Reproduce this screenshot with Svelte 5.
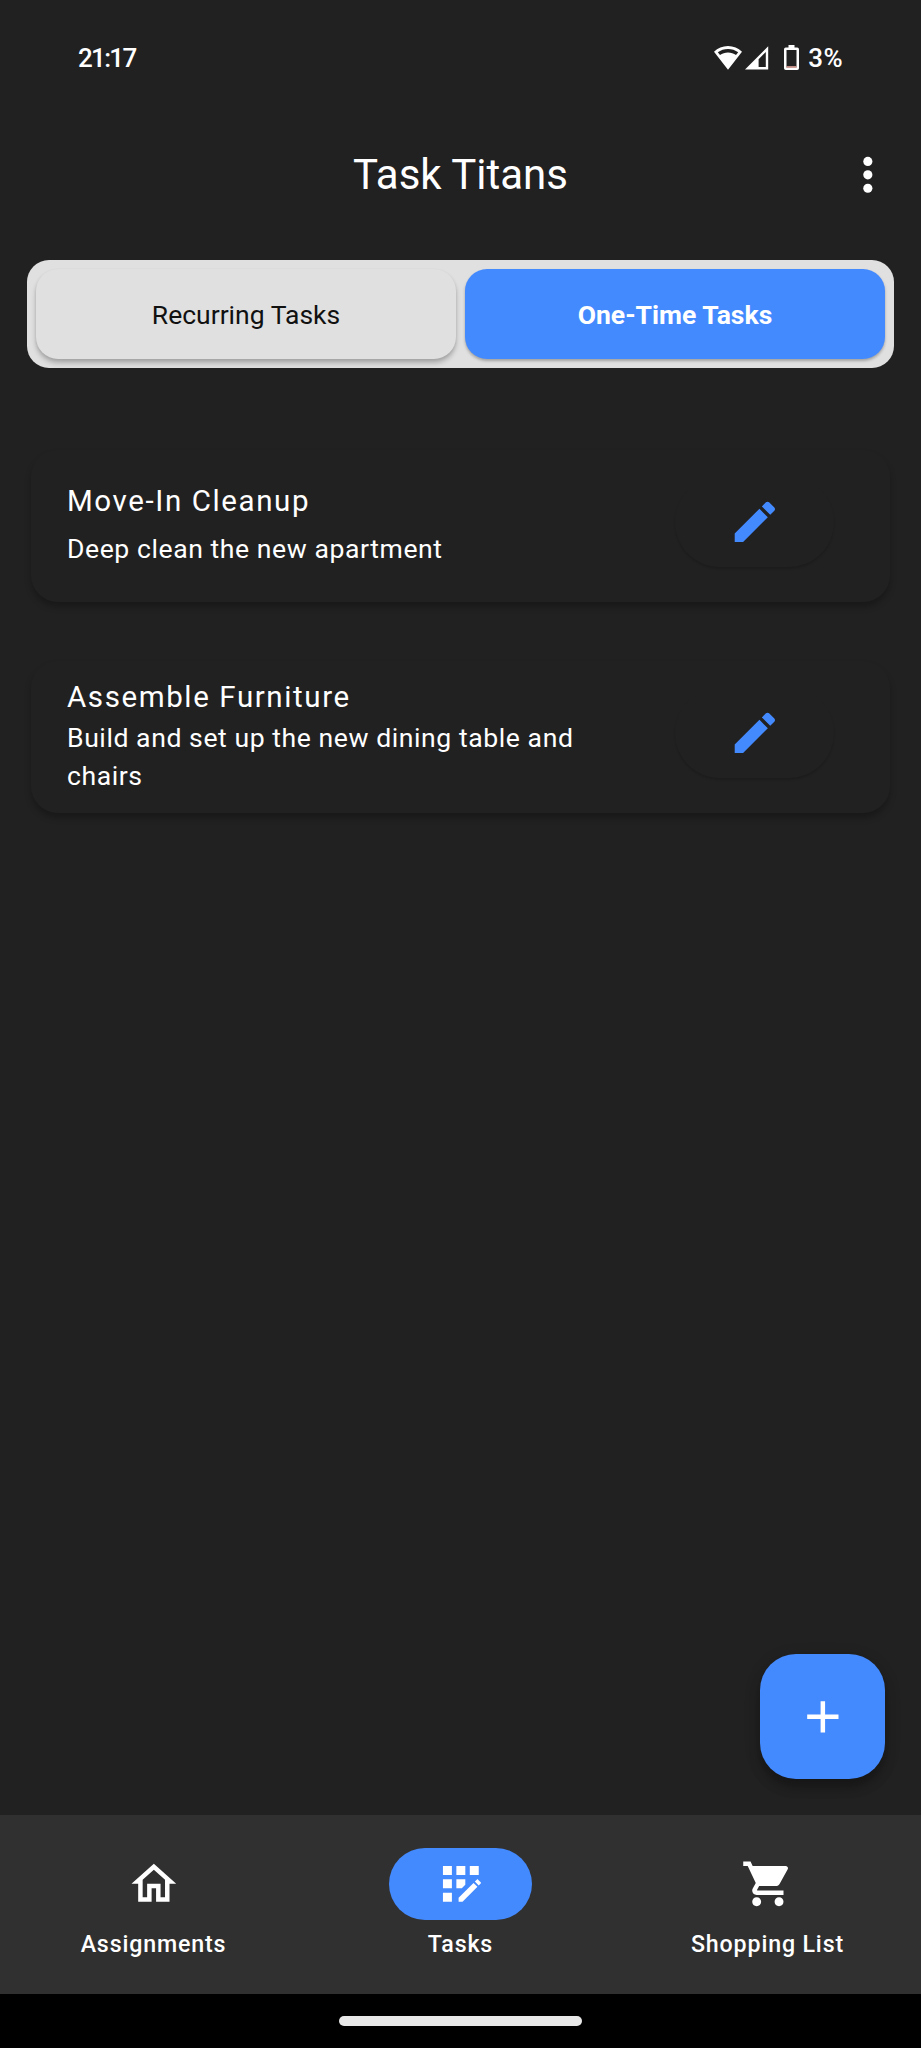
<script>
  const tasks = [
    { title: 'Move-In Cleanup', text: 'Deep clean the new apartment', gap: 8 },
    { title: 'Assemble Furniture', text: 'Build and set up the new dining table and chairs', gap: 1 },
  ];
  const tabs = [
    {
      label: 'Assignments',
      d: 'M12 5.69l5 4.5V18h-2v-6H9v6H7v-7.81l5-4.5M12 3L2 12h3v8h6v-6h2v6h6v-8h3L12 3z',
    },
    {
      label: 'Tasks',
      active: true,
      d: 'M10 4h4v4h-4z M4 16h4v4H4z M4 10h4v4H4z M4 4h4v4H4z M14 12.42V10h-4v4h2.42z M20.88 11.29l-1.17-1.17c-.16-.16-.42-.16-.58 0l-.88.88L20 12.75l.88-.88c.16-.16.16-.42 0-.58z M11 18.25V20h1.75l6.67-6.67-1.75-1.75z M16 4h4v4h-4z',
    },
    {
      label: 'Shopping List',
      d: 'M7 18c-1.1 0-1.99.9-1.99 2S5.9 22 7 22s2-.9 2-2-.9-2-2-2zM1 2v2h2l3.6 7.59-1.35 2.45c-.16.28-.25.61-.25.96 0 1.1.9 2 2 2h12v-2H7.42c-.14 0-.25-.11-.25-.25l.03-.12.9-1.63h7.45c.75 0 1.41-.41 1.75-1.03l3.58-6.49c.08-.14.12-.31.12-.48 0-.55-.45-1-1-1H5.21l-.94-2H1zm16 16c-1.1 0-1.99.9-1.99 2s.89 2 1.99 2 2-.9 2-2-.9-2-2-2z',
    },
  ];
</script>

<div class="screen">
  <div class="status">
    <span class="time">21:17</span>
    <div class="indicators">
      <svg class="wifi" width="28" height="24" viewBox="0 0 28 24">
        <path fill="#fff" fill-rule="evenodd" d="M14 0C8.600 0 3.700 2.200 0 5.700L14 23.800L28 5.700C24.300 2.200 19.400 0 14 0zM3.800 6.200C6.700 4.100 10.200 2.900 14 2.900S21.300 4.100 24.200 6.200L22 9C19.700 7.300 17 6.400 14 6.400S8.300 7.300 6 9z" />
      </svg>
      <svg class="signal" width="24" height="24" viewBox="0 0 24 24">
        <path fill="#fff" fill-rule="evenodd" d="M23.200 .3V23.400H0zM20.800 6L13.600 13.200V21H20.800z" />
      </svg>
      <svg class="battery" width="15" height="25" viewBox="0 0 15 25">
        <path fill="#fff" fill-rule="evenodd" d="M4.500 0h6v2.600H13.200Q15 2.600 15 4.400V23.200Q15 25 13.200 25H1.800Q0 25 0 23.200V4.400Q0 2.600 1.800 2.600H4.500zM2.500 5.100V22.500H12.500V5.100z" />
        <path fill="#e9a79c" d="M2.500 21.200h10v1.500h-10z" />
      </svg>
      <span class="percent">3%</span>
    </div>
  </div>

  <header>
    <h1>Task Titans</h1>
    <button class="menu" aria-label="Menu">
      <svg class="icon" viewBox="0 0 24 24"><circle cx="12" cy="6" r="2.050" /><circle cx="12" cy="12" r="2.050" /><circle cx="12" cy="18" r="2.050" /></svg>
    </button>
  </header>

  <div class="segments">
    <button>Recurring Tasks</button>
    <button class="selected">One-Time Tasks</button>
  </div>

  <main>
    {#each tasks as task}
      <article>
        <div class="copy">
          <h2>{task.title}</h2>
          <p style="margin-top: {task.gap}px">{task.text}</p>
        </div>
        <button class="edit" aria-label="Edit">
          <svg class="icon" viewBox="0 0 24 24">
            <path d="M3 17.25V21h3.75L17.81 9.94l-3.75-3.75L3 17.25zM20.71 7.04c.39-.39.39-1.020 0-1.410l-2.340-2.340c-.39-.39-1.020-.39-1.410 0l-1.830 1.830 3.750 3.750 1.830-1.830z" />
          </svg>
        </button>
      </article>
    {/each}
  </main>

  <div class="fab-row">
    <button class="fab" aria-label="Add">
      <svg class="icon" viewBox="0 0 24 24"><path d="M19 13h-6v6h-2v-6H5v-2h6V5h2v6h6v2z" /></svg>
    </button>
  </div>

  <nav>
    {#each tabs as tab}
      <div class="tab">
        <div class="pill" class:active={tab.active}>
          <svg class="icon" viewBox="0 0 24 24"><path d={tab.d} /></svg>
        </div>
        <span>{tab.label}</span>
      </div>
    {/each}
  </nav>
  <div class="gesture"><div class="handle"></div></div>
</div>

<style>
  :global(body) { background: #212121; }
  .screen {
    width: 921px; height: 2048px; display: flex; flex-direction: column;
    background: #212121; color: #fff; font-family: Roboto, sans-serif; overflow: hidden;
  }
  button { border: 0; padding: 0; margin: 0; font: inherit; color: inherit; background: none; }
  h1, h2, p { margin: 0; font-weight: 400; }
  .icon { width: 53.7px; height: 53.7px; fill: currentColor; display: block; }
  .status {
    height: 115px; flex: none; box-sizing: border-box; display: flex; justify-content: space-between;
    padding: 0 78px; font-size: 26px; font-weight: 500; line-height: 116px;
  }
  .time { letter-spacing: -1.700px; }
  .indicators { display: flex; align-items: center; }
  .signal { margin-left: 3px; }
  .battery { margin-left: 15px; }
  .percent { margin-left: 9px; letter-spacing: .4px; }
  header {
    height: 119px; flex: none; display: grid; grid-template-columns: 107px 1fr 107px; align-items: center;
  }
  h1 { grid-column: 2; text-align: center; font-size: 42px; line-height: 50px; }
  .menu { justify-self: center; }
  .segments {
    flex: none; height: 107.500px; margin: 26px 27px 0; box-sizing: border-box; padding: 9px;
    display: grid; grid-template-columns: 1fr 1fr; gap: 9px; background: #e0e0e0; border-radius: 22px;
  }
  .segments button {
    border-radius: 22px; background: #e0e0e0; color: #111; font-size: 26.500px; padding-top: 1px;
    box-shadow: 0 4px 5px rgba(0, 0, 0, .24), 0 1px 3px rgba(0, 0, 0, .07);
  }
  .segments .selected {
    background: #448aff; color: #fff; font-weight: 700;
    box-shadow: 0 2px 3px rgba(0, 0, 0, .28);
  }
  main { flex: 1; padding: 82px 31px 0; display: flex; flex-direction: column; gap: 59px; }
  article {
    height: 152px; box-sizing: border-box; padding: 0 56px 0 36px; border-radius: 27px;
    display: flex; align-items: center; justify-content: space-between;
    box-shadow: 0 5px 6px rgba(0, 0, 0, .25);
  }
  .copy { width: 550px; padding-bottom: 3px; }
  h2 { font-size: 29.500px; line-height: 42px; letter-spacing: 1.600px; }
  p { font-size: 26.600px; line-height: 38px; letter-spacing: .56px; }
  .edit {
    width: 159px; height: 90px; margin-top: -8px; border-radius: 45px; color: #448aff;
    display: grid; place-items: center; box-shadow: 0 2px 2px rgba(0, 0, 0, .15);
  }
  .fab-row { flex: none; display: flex; justify-content: flex-end; padding: 0 36px 36px; }
  .fab {
    width: 125px; height: 125px; border-radius: 36px; background: #448aff;
    display: grid; place-items: center;
    box-shadow: 0 9px 11px rgba(0, 0, 0, .26), 0 4px 18px rgba(0, 0, 0, .1);
  }
  nav {
    flex: none; height: 179px; box-sizing: border-box; padding-top: 33px; background: #303030;
    display: grid; grid-template-columns: repeat(3, 1fr);
  }
  .tab { display: flex; flex-direction: column; align-items: center; gap: 8px; }
  .tab span { font-size: 23.200px; line-height: 32px; font-weight: 500; letter-spacing: .850px; }
  .pill { width: 143px; height: 72px; border-radius: 36px; display: grid; place-items: center; }
  .active { background: #448aff; }
  .gesture { flex: none; height: 54px; background: #000; display: grid; place-items: center; }
  .handle { width: 243px; height: 10px; border-radius: 5px; background: #e8e8e8; }
</style>
